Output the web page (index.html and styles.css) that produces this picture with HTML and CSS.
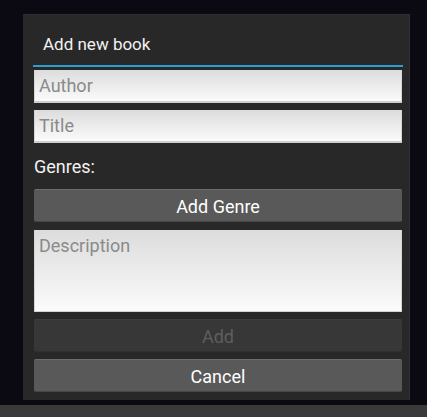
FILE: index.html
```html
<!DOCTYPE html>
<html>
<head>
<meta charset="utf-8">
<link rel="stylesheet" href="styles.css">
</head>
<body>
<div class="screen">
  <div class="dialog">
    <div class="dialog-title">Add new book</div>
    <div class="divider"></div>
    <div class="body">
      <div class="field">Author</div>
      <div class="field gap7">Title</div>
      <div class="label">Genres:</div>
      <div class="btn">Add Genre</div>
      <div class="field area gap8">Description</div>
      <div class="btn disabled gap7">Add</div>
      <div class="btn gap7">Cancel</div>
    </div>
  </div>
  <div class="bottom-bar"></div>
</div>
</body>
</html>
```
FILE: styles.css
```css
html, body {
  margin: 0;
  padding: 0;
  background: #0b0a13;
  font-family: Roboto, "Noto Sans", sans-serif;
}
.screen {
  width: 427px;
  height: 417px;
  display: flex;
  flex-direction: column;
  overflow: hidden;
}
.dialog {
  margin: 14px 0 0 23px;
  width: 387px;
  height: 386px;
  box-sizing: border-box;
  background: #282828;
  border-top: 1px solid #2e2e2e;
  border-right: 1px solid #303030;
  display: flex;
  flex-direction: column;
  padding: 0 6px 0 10px;
}
.dialog-title {
  height: 50px;
  box-sizing: border-box;
  padding: 19px 0 0 10px;
  font-size: 17px;
  line-height: 20px;
  color: #f2f2f2;
}
.divider {
  height: 2px;
  background: #2a9fd0;
  margin: 0;
}
.body {
  display: flex;
  flex-direction: column;
  padding: 3px 1px 0 1px;
}
.field {
  height: 33px;
  box-sizing: border-box;
  background: linear-gradient(#dcdcdc, #fbfbfb);
  border-bottom: 2px solid #cfcfcf;
  border-left: 1px solid #d6d6d6;
  border-right: 1px solid #d6d6d6;
  color: #8a8a8a;
  font-size: 18px;
  line-height: 21px;
  padding: 5px 0 0 4px;
}
.field.area {
  height: 82px;
  border-bottom: 1px solid #d4d4d4;
}
.gap7 { margin-top: 7px; }
.gap8 { margin-top: 8px; }
.label {
  height: 46px;
  box-sizing: border-box;
  padding-top: 13px;
  font-size: 18px;
  line-height: 21px;
  color: #f2f2f2;
}
.btn {
  height: 33px;
  box-sizing: border-box;
  background: #595959;
  border-top: 1px solid #6c6c6c;
  border-bottom: 1px solid #474747;
  border-radius: 2px;
  color: #ffffff;
  font-size: 18px;
  line-height: 33px;
  text-align: center;
}
.btn.disabled {
  background: #373737;
  border-top: 1px solid #3e3e3e;
  border-bottom: 1px solid #303030;
  color: #5e5e5e;
}
.bottom-bar {
  margin-top: 5px;
  height: 12px;
  background: #3a3a3a;
}
```
